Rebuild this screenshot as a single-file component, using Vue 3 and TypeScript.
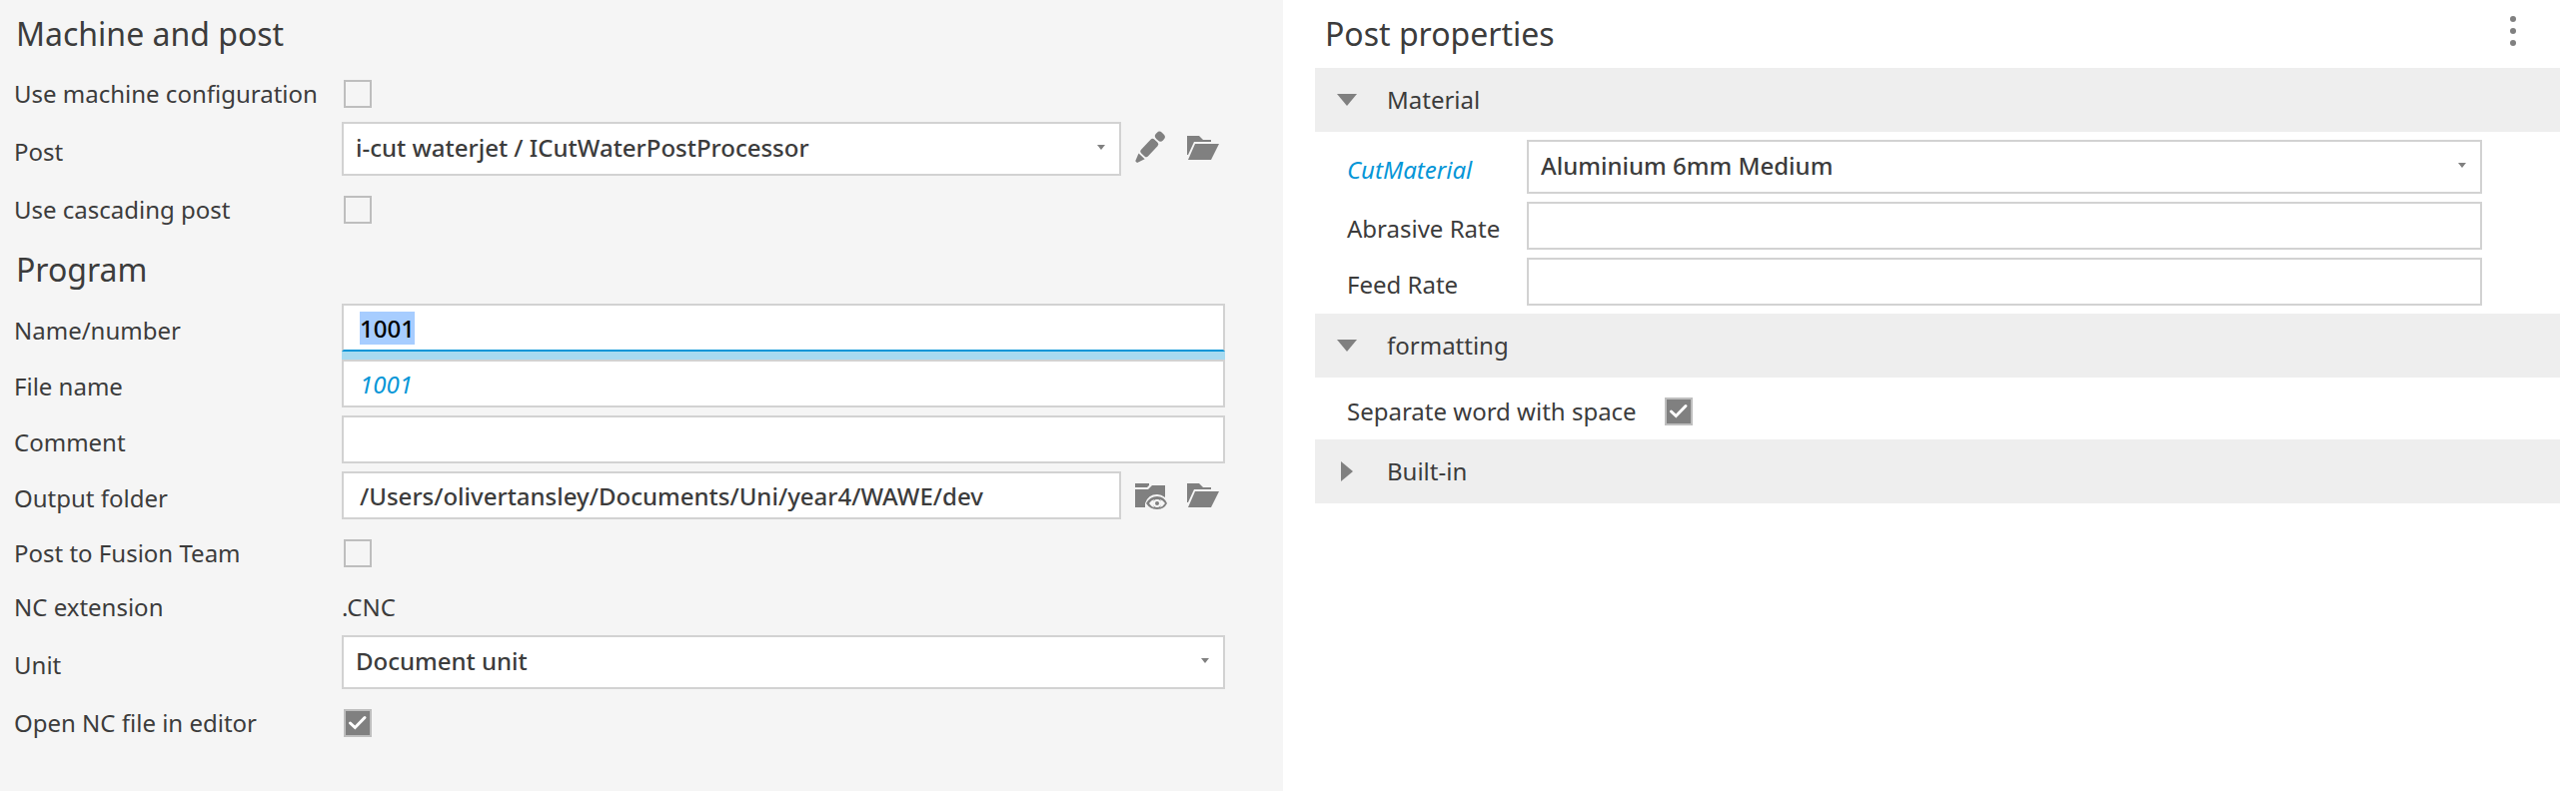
<script setup lang="ts">
import { onMounted, ref } from 'vue'

const form = ref({
  useMachine: false,
  post: 'i-cut waterjet / ICutWaterPostProcessor',
  cascading: false,
  name: '1001',
  fileName: '1001',
  comment: '',
  folder: '/Users/olivertansley/Documents/Uni/year4/WAWE/dev',
  fusionTeam: false,
  unit: 'Document unit',
  openEditor: true,
})

const props = ref({
  material: 'Aluminium 6mm Medium',
  abrasive: '',
  feed: '',
  separate: true,
})

const open = ref({ material: true, formatting: true, builtIn: false })

const nameInput = ref<HTMLInputElement | null>(null)

onMounted(() => {
  nameInput.value?.focus()
  nameInput.value?.select()
})
</script>

<template>
  <main class="dialog">
    <form class="panel settings" @submit.prevent>
      <h2>Machine and post</h2>
      <div class="group first">
        <div class="row compact">
          <label for="use-machine">Use machine configuration</label>
          <input id="use-machine" v-model="form.useMachine" type="checkbox" />
        </div>
        <div class="row with-select">
          <label for="post">Post</label>
          <div class="control">
            <div class="select">
              <select id="post" v-model="form.post">
                <option>i-cut waterjet / ICutWaterPostProcessor</option>
              </select>
              <svg viewBox="0 0 8 5" aria-hidden="true"><path d="M0 0h8L4 5z" /></svg>
            </div>
            <div class="actions">
              <button type="button" aria-label="Edit post">
                <svg viewBox="0 0 32 32">
                  <g transform="rotate(-47 14.3 16)">
                    <rect x="4.8" y="11.2" width="19" height="9.6" rx="2.6" />
                    <rect x="25.6" y="11.2" width="8.4" height="9.6" rx="3.6" />
                    <path d="M3 11.800v8.400L-5 17.200v-2.400z" />
                  </g>
                </svg>
              </button>
              <button type="button" aria-label="Browse posts">
                <svg viewBox="0 0 32 32">
                  <path d="M0 4h12l4 4h8v2H7L1 23H0z" />
                  <path d="M8 12h24l-8 16H1z" />
                </svg>
              </button>
            </div>
          </div>
        </div>
        <div class="row">
          <label for="cascading">Use cascading post</label>
          <input id="cascading" v-model="form.cascading" type="checkbox" />
        </div>
      </div>

      <h2>Program</h2>
      <div class="group">
        <div class="row with-input">
          <label for="name">Name/number</label>
          <input id="name" ref="nameInput" v-model="form.name" type="text" />
        </div>
        <div class="row with-input">
          <label for="file-name">File name</label>
          <input id="file-name" v-model="form.fileName" class="linked" type="text" />
        </div>
        <div class="row with-input">
          <label for="comment">Comment</label>
          <input id="comment" v-model="form.comment" type="text" />
        </div>
        <div class="row with-input">
          <label for="folder">Output folder</label>
          <div class="control">
            <input id="folder" v-model="form.folder" type="text" />
            <div class="actions">
              <button type="button" aria-label="Show output folder">
                <svg viewBox="0 0 32 32">
                  <path d="M0 4h14v2l-2 2H0z" />
                  <path d="M0 10h13l4-4h13v12q-4-3-8-3-9 0-12 9v4H0z" />
                  <path
                    fill-rule="evenodd"
                    d="M11 24q4-7 11-7t10 7q-3 6-10 6t-11-6zm3 0q3 4 5 4-2-4 0-8-3 1-5 4zm11-4q2 4 0 8 3-1 5-4-2-3-5-4zm-3 0a4 4 0 1 0 0 8 4 4 0 0 0 0-8z"
                  />
                  <circle cx="22" cy="24" r="2" />
                </svg>
              </button>
              <button type="button" aria-label="Browse folders">
                <svg viewBox="0 0 32 32">
                  <path d="M0 4h12l4 4h8v2H7L1 23H0z" />
                  <path d="M8 12h24l-8 16H1z" />
                </svg>
              </button>
            </div>
          </div>
        </div>
        <div class="row">
          <label for="fusion-team">Post to Fusion Team</label>
          <input id="fusion-team" v-model="form.fusionTeam" type="checkbox" />
        </div>
        <div class="row compact">
          <span>NC extension</span>
          <output>.CNC</output>
        </div>
        <div class="row with-select">
          <label for="unit">Unit</label>
          <div class="select">
            <select id="unit" v-model="form.unit">
              <option>Document unit</option>
            </select>
            <svg viewBox="0 0 8 5" aria-hidden="true"><path d="M0 0h8L4 5z" /></svg>
          </div>
        </div>
        <div class="row">
          <label for="open-editor">Open NC file in editor</label>
          <input id="open-editor" v-model="form.openEditor" type="checkbox" />
        </div>
      </div>
    </form>

    <section class="panel properties">
      <header>
        <h2>Post properties</h2>
        <button type="button" class="more" aria-label="More options">
          <svg viewBox="0 0 6 30">
            <circle cx="3" cy="3" r="3" />
            <circle cx="3" cy="15" r="3" />
            <circle cx="3" cy="27" r="3" />
          </svg>
        </button>
      </header>

      <button
        type="button"
        class="bar"
        :aria-expanded="open.material"
        @click="open.material = !open.material"
      >
        <svg viewBox="0 0 20 20" aria-hidden="true">
          <path :d="open.material ? 'M0 4h20L10 16z' : 'M4 0v20l12-10z'" />
        </svg>
        Material
      </button>
      <div v-if="open.material" class="fields">
        <div class="row with-select">
          <label for="cut-material" class="linked">CutMaterial</label>
          <div class="select">
            <select id="cut-material" v-model="props.material">
              <option>Aluminium 6mm Medium</option>
            </select>
            <svg viewBox="0 0 8 5" aria-hidden="true"><path d="M0 0h8L4 5z" /></svg>
          </div>
        </div>
        <div class="row with-input">
          <label for="abrasive">Abrasive Rate</label>
          <input id="abrasive" v-model="props.abrasive" type="text" />
        </div>
        <div class="row with-input">
          <label for="feed">Feed Rate</label>
          <input id="feed" v-model="props.feed" type="text" />
        </div>
      </div>

      <button
        type="button"
        class="bar"
        :aria-expanded="open.formatting"
        @click="open.formatting = !open.formatting"
      >
        <svg viewBox="0 0 20 20" aria-hidden="true">
          <path :d="open.formatting ? 'M0 4h20L10 16z' : 'M4 0v20l12-10z'" />
        </svg>
        formatting
      </button>
      <div v-if="open.formatting" class="toggle">
        <label for="separate">Separate word with space</label>
        <input id="separate" v-model="props.separate" type="checkbox" />
      </div>

      <button
        type="button"
        class="bar"
        :aria-expanded="open.builtIn"
        @click="open.builtIn = !open.builtIn"
      >
        <svg viewBox="0 0 20 20" aria-hidden="true">
          <path :d="open.builtIn ? 'M0 4h20L10 16z' : 'M4 0v20l12-10z'" />
        </svg>
        Built-in
      </button>
    </section>
  </main>
</template>

<style>
body {
  margin: 0;
  background: #fff;
}
</style>

<style scoped>
.dialog {
  display: grid;
  grid-template-columns: 642fr 647fr;
  min-height: 100vh;
  color: #3c3c3c;
  font: 400 24px/32px "Noto Sans", "Open Sans", sans-serif;
}

.panel {
  min-width: 0;
  padding-top: 4px;
}

.settings {
  padding-left: 14px;
  padding-right: 58px;
  background: #f5f5f5;
}

.properties {
  padding-left: 32px;
  padding-right: 16px;
  background: #fff;
}

h2 {
  margin: 0;
  padding-left: 2px;
  font-size: 32px;
  font-weight: 400;
  line-height: 60px;
}

.first {
  padding-top: 6px;
}

.row {
  display: grid;
  grid-template-columns: 328px 1fr;
  align-items: center;
  min-height: 60px;
}

.row.compact {
  min-height: 48px;
}

.row.with-input {
  min-height: 56px;
}

.row.with-select {
  min-height: 62px;
}

.with-input label,
.with-select label {
  padding-top: 6px;
}

.control {
  display: flex;
  align-items: center;
}

input,
select,
button {
  box-sizing: border-box;
  margin: 0;
  border-radius: 0;
  color: inherit;
  font: inherit;
  appearance: none;
}

input[type="text"] {
  width: 100%;
  min-width: 0;
  height: 48px;
  padding: 0 16px;
  border: 2px solid #d2d2d2;
  background: #fff;
  font-weight: 500;
  outline: none;
}

input[type="text"]:focus {
  border-bottom-color: #0696d7;
  box-shadow: 0 8px 0 #a7daf0;
}

input::selection {
  background: rgba(166, 204, 255, 0.99);
  color: #000;
}

input[type="text"].linked {
  font-weight: 400;
}

.linked {
  color: #0696d7;
  font-style: italic;
}

.select {
  position: relative;
  flex: 1;
  min-width: 0;
}

select {
  display: block;
  width: 100%;
  height: 54px;
  padding: 0 32px 2px 12px;
  border: 2px solid #d2d2d2;
  background: #fff;
  font-weight: 500;
}

.select svg {
  position: absolute;
  top: 23px;
  right: 16px;
  width: 8px;
  height: 5px;
  pointer-events: none;
}

svg {
  display: block;
  fill: #808080;
}

input[type="checkbox"] {
  width: 28px;
  height: 28px;
  margin-left: 2px;
  border: 2px solid #bebebe;
  background: transparent;
}

input[type="checkbox"]:checked {
  background: #808080
    url("data:image/svg+xml,%3Csvg xmlns='http://www.w3.org/2000/svg' viewBox='0 0 24 24'%3E%3Cpath d='M4.500 12l4.800 4.500L19 6.500' fill='none' stroke='%23fff' stroke-width='3' stroke-linecap='round'/%3E%3C/svg%3E")
    center / 24px no-repeat;
}

.actions {
  display: flex;
  gap: 20px;
  padding-left: 14px;
  padding-right: 6px;
}

.with-select .actions {
  padding-bottom: 2px;
}

button {
  padding: 0;
  border: 0;
  background: none;
  cursor: pointer;
}

.actions svg {
  width: 32px;
  height: 32px;
  overflow: visible;
}

header {
  display: flex;
  align-items: flex-start;
  justify-content: space-between;
  padding-left: 8px;
  padding-right: 44px;
  margin-bottom: 4px;
}

.more {
  padding-top: 12px;
}

.more svg {
  width: 6px;
  height: 30px;
}

.bar {
  display: flex;
  align-items: center;
  gap: 30px;
  width: 100%;
  height: 64px;
  padding: 0 22px;
  background: #eee;
  text-align: left;
}

.bar svg {
  width: 20px;
  height: 20px;
}

.fields {
  padding: 4px 78px 4px 32px;
}

.fields .row {
  grid-template-columns: 180px 1fr;
}

.toggle {
  display: flex;
  align-items: center;
  gap: 26px;
  box-sizing: border-box;
  min-height: 62px;
  padding-top: 6px;
  padding-left: 32px;
}
</style>
